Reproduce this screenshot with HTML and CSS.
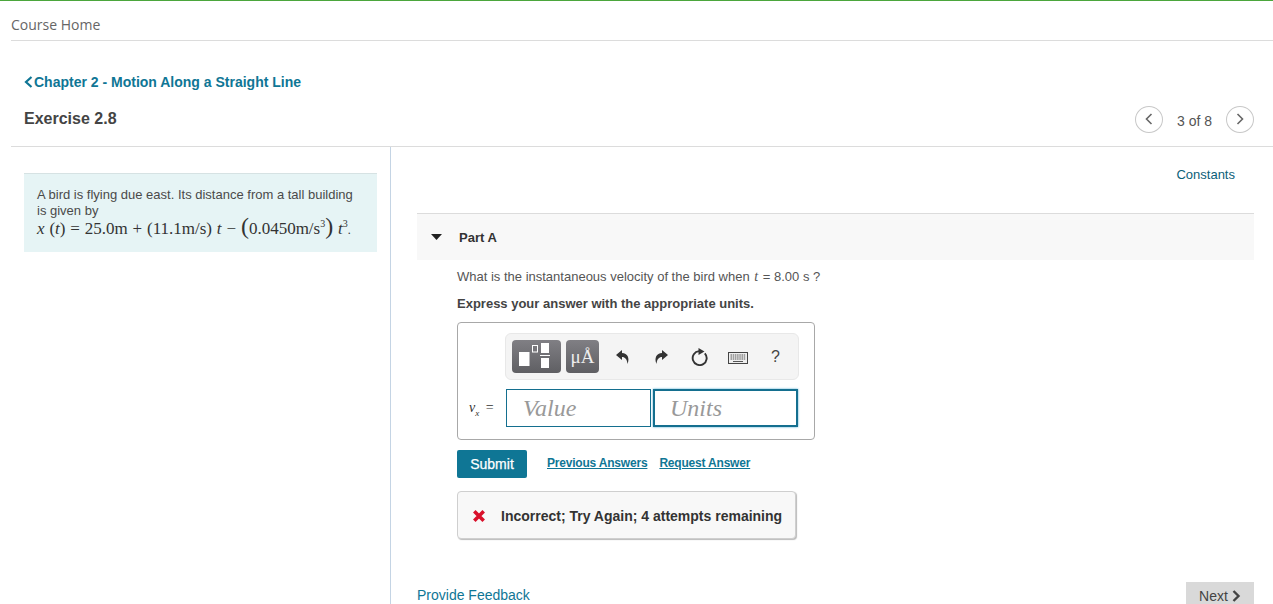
FILE: index.html
```html
<!DOCTYPE html>
<html lang="en">
<head>
<meta charset="utf-8">
<title>Exercise 2.8</title>
<link rel="stylesheet" href="styles.css">
</head>
<body>
<div class="page">
  <header class="course"><a class="course-link">Course Home</a></header>
  <nav class="chapter">
    <svg class="chev" width="9" height="12" viewBox="0 0 9 12"><path d="M7.500 1 2 6l5.500 5" fill="none" stroke="#0f7695" stroke-width="2.200"/></svg>
    <a>Chapter 2 - Motion Along a Straight Line</a>
  </nav>
  <div class="title-row">
    <h1>Exercise 2.8</h1>
    <div class="pager">
      <span class="circle"><svg width="10" height="14" viewBox="0 0 10 14"><path d="M7.500 2 2.500 7l5 5" fill="none" stroke="#666" stroke-width="1.600"/></svg></span>
      <span class="count">3 of 8</span>
      <span class="circle"><svg width="10" height="14" viewBox="0 0 10 14"><path d="M2.500 2l5 5-5 5" fill="none" stroke="#666" stroke-width="1.600"/></svg></span>
    </div>
  </div>
  <main class="columns">
    <aside class="left">
      <div class="intro">
        <p>A bird is flying due east. Its distance from a tall building is given by</p>
        <p class="math"><i>x</i> (<i>t</i>) = 25.0m + (11.1m/s) <i>t</i> − <span class="big">(</span>0.0450m/s<sup>3</sup><span class="big">)</span> <i>t</i><sup>3</sup><span class="dot">.</span></p>
      </div>
    </aside>
    <section class="right">
      <div class="constants"><a>Constants</a></div>
      <div class="part-head">
        <svg class="caret" width="11" height="6" viewBox="0 0 11 6"><path d="M0 0h11L5.500 6z" fill="#222"/></svg>
        <span>Part A</span>
      </div>
      <div class="part-body">
        <p class="question">What is the instantaneous velocity of the bird when <i class="t">t</i> = 8.00 s ?</p>
        <p class="express">Express your answer with the appropriate units.</p>
        <div class="answer">
          <div class="toolbar">
            <span class="tool tool-wide">
              <svg width="49" height="33" viewBox="0 0 49 33">
                <rect x="7" y="12" width="10.500" height="14" fill="#fff"/>
                <rect x="20.500" y="5.500" width="5" height="6.500" fill="none" stroke="#fff" stroke-width="1"/>
                <rect x="29" y="3" width="8" height="10" fill="#fff"/>
                <rect x="28" y="15" width="10" height="1" fill="#fff"/>
                <rect x="29" y="18" width="8" height="10" fill="#fff"/>
              </svg>
            </span>
            <span class="tool tool-unit">μÅ</span>
            <span class="icons">
              <svg class="undo" width="14" height="16" viewBox="0 0 14 16"><path d="M6 1 0 6l6 5V8c3 0 5 2 5.500 7C14 9 11.500 4 6 4z" fill="#333"/></svg>
              <svg class="redo" width="14" height="16" viewBox="0 0 14 16"><path d="M8 1l6 5-6 5V8c-3 0-5 2-5.500 7C0 9 2.500 4 8 4z" fill="#333"/></svg>
              <svg class="reload" width="18" height="18" viewBox="0 0 18 18"><path d="M13.800 5.300A7 7 0 1 1 8 3.100" fill="none" stroke="#333" stroke-width="1.900"/><path d="M7.500 0l6 3.500-6 3.500z" fill="#333"/></svg>
              <svg class="kbd" width="20" height="12" viewBox="0 0 20 12"><rect x=".5" y=".5" width="19" height="11" fill="#eee" stroke="#444"/><path d="M2.500 3h15M2.500 5h15M2.500 7h15" stroke="#555" stroke-dasharray="1.500 .7"/><path d="M5 9.500h10" stroke="#555"/></svg>
              <span class="help">?</span>
            </span>
          </div>
          <div class="inputs">
            <span class="label"><i>v<sub>x</sub></i> =</span>
            <span class="field">Value</span>
            <span class="field focus">Units</span>
          </div>
        </div>
        <div class="actions">
          <button class="submit">Submit</button>
          <a>Previous Answers</a>
          <a>Request Answer</a>
        </div>
        <div class="feedback">
          <svg width="14" height="14" viewBox="0 0 14 14"><path d="M2.300 2.300l9.400 9.400M11.700 2.300l-9.400 9.400" stroke="#d9112b" stroke-width="3.600"/></svg>
          <span>Incorrect; Try Again; 4 attempts remaining</span>
        </div>
      </div>
      <div class="bottom">
        <a>Provide Feedback</a>
        <span class="next">Next <svg width="9" height="12" viewBox="0 0 9 12"><path d="M1.500 1l5 5-5 5" fill="none" stroke="#444" stroke-width="2.400"/></svg></span>
      </div>
    </section>
  </main>
</div>
</body>
</html>
```
FILE: styles.css
```css
html, body { margin: 0; padding: 0; height: 100%; overflow: hidden; background: #fff; }
.page { height: 604px; overflow: hidden; border-top: 1px solid #4ba63c; box-sizing: border-box; font-family: "Liberation Sans", Arial, sans-serif; color: #444; }
p, h1 { margin: 0; }

.course { height: 39px; margin-left: 11px; border-bottom: 1px solid #dcdcdc; display: flex; align-items: center; }
.course-link { font-family: "Open Sans", sans-serif; font-size: 14px; color: #666; padding-top: 8px; }

.chapter { display: flex; align-items: center; gap: 1px; margin: 33px 0 0 24px; height: 16px; font-size: 14px; font-weight: bold; color: #0f7695; }
.chev { flex: none; }

.title-row { display: flex; justify-content: space-between; align-items: center; height: 32px; margin: 13px 19px 0 24px; }
h1 { font-size: 16px; font-weight: bold; color: #444; }
.pager { display: flex; align-items: center; font-size: 14px; color: #555; }
.count { margin: 0 14px; padding-top: 3px; }
.circle { width: 28px; height: 27px; box-sizing: border-box; border: 1px solid #c8c8c8; border-radius: 50%; display: flex; align-items: center; justify-content: center; }

.columns { display: flex; margin: 11px 0 0 11px; border-top: 1px solid #dcdcdc; height: 460px; }
.left { flex: none; width: 353px; border-right: 1px solid #c4d4e4; padding: 26px 13px 0; }
.intro { background: #e6f4f5; border-top: 1px solid #d6e2e3; height: 65px; padding: 13px 13px 0; font-size: 13px; line-height: 16px; color: #4a4a4a; }
.math { font-family: "Liberation Serif", serif; font-size: 17px; line-height: 20px; white-space: nowrap; word-spacing: 0.6px; color: #333; }
.math sup { font-size: 10px; line-height: 0; }
.big { font-size: 24px; line-height: 0; font-weight: lighter; }
.dot { font-size: 12px; }

.right { flex: 1; min-width: 0; padding: 0 19px 0 26px; }
.constants { text-align: right; padding: 21px 19px 0 0; height: 46px; box-sizing: border-box; font-size: 13px; line-height: 14px; color: #0b6179; margin-bottom: 20px; }
.part-head { height: 46px; background: #f8f8f8; border-top: 1px solid #dcdcdc; display: flex; align-items: center; font-size: 13px; font-weight: bold; color: #333; }
.caret { margin: 0 0 0 14px; flex: none; }
.part-head span { margin-left: 17px; }

.part-body { padding: 9px 0 0 40px; }
.question { font-size: 13px; line-height: 16px; color: #555; white-space: nowrap; }
.t { font-family: "Liberation Serif", serif; font-size: 14px; margin: 0 1px; }
.express { font-size: 13px; font-weight: bold; line-height: 16px; color: #444; margin-top: 11px; }

.answer { width: 358px; height: 118px; box-sizing: border-box; margin-top: 10px; border: 1px solid #a8a8a8; border-radius: 4px; padding: 10px 15px 0 0; }
.toolbar { margin-left: 47px; height: 47px; box-sizing: border-box; background: #f4f4f4; border: 1px solid #e8e8e8; border-radius: 6px; display: flex; align-items: center; padding-left: 6px; }
.tool { display: flex; align-items: center; justify-content: center; height: 33px; border-radius: 4px; background: linear-gradient(#807f84, #5f5f63); color: #eee; box-sizing: border-box; }
.tool-wide { width: 49px; }
.tool-unit { width: 33px; margin-left: 5px; font-family: "Liberation Serif", serif; font-size: 19px; }
.icons { display: flex; align-items: center; margin-left: 17px; }
.icons svg { flex: none; }
.undo { margin-right: 24px; }
.redo { margin-right: 23px; }
.reload { margin-right: 19px; }
.icons .kbd { margin-right: 23px; margin-top: 3px; }
.help { font-size: 16px; color: #444; }

.inputs { display: flex; align-items: center; margin-top: 9px; height: 38px; }
.label { width: 48px; flex: none; box-sizing: border-box; padding-left: 11px; font-family: "Liberation Serif", serif; font-size: 14px; word-spacing: 3px; color: #333; white-space: nowrap; }
.label sub { font-size: 9px; line-height: 0; }
.field { width: 145px; height: 38px; box-sizing: border-box; border: 1px solid #146f8f; padding-left: 16px; font-family: "Liberation Serif", serif; font-style: italic; font-size: 24px; line-height: 37px; color: #999; background: #fff; }
.field.focus { margin-left: 2px; border: 2px solid #146f8f; box-shadow: 0 0 2px #49a8d0; padding-left: 15px; line-height: 34px; }

.actions { display: flex; align-items: flex-start; margin-top: 10px; height: 28px; font-size: 12px; font-weight: bold; color: #0f7695; }
.actions a { text-decoration: underline; line-height: 14px; margin-top: 6px; margin-left: 12px; letter-spacing: -0.2px; }
.actions a:nth-of-type(1) { margin-left: 20px; }
.submit { width: 70px; height: 28px; padding: 0; border: 0; border-radius: 2px; background: #0f7695; color: #fff; font: 14px "Liberation Sans", Arial, sans-serif; -webkit-text-stroke: 0.25px #fff; }

.feedback { display: flex; align-items: center; width: 339px; height: 48px; box-sizing: border-box; margin-top: 13px; padding: 2px 0 0 14px; background: #f8f8f8; border: 1px solid #cfcfcf; border-radius: 4px; box-shadow: 1px 1px 1px #bbb; font-size: 14px; font-weight: bold; color: #333; }
.feedback span { margin-left: 15px; white-space: nowrap; }

.bottom { display: flex; justify-content: space-between; align-items: flex-start; margin-top: 43px; font-size: 14px; color: #0f7695; }
.bottom a { line-height: 16px; margin-top: 5px; }
.next { width: 68px; height: 28px; box-sizing: border-box; background: #d9d9d9; color: #444; display: flex; align-items: center; justify-content: center; gap: 4px; }
```
